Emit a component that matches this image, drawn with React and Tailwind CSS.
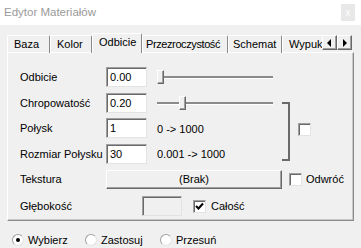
import React from 'react'

const TABS = [
  { label: 'Baza', w: 'w-[43px]', pad: 'pl-[6px]' },
  { label: 'Kolor', w: 'w-[42px]', pad: 'pl-[6px]' },
  { label: 'Odbicie', w: 'w-[50px]', pad: 'pl-[6px]', active: true },
  { label: 'Przezroczystość', w: 'w-[86px]', pad: 'pl-[3px] tracking-[-0.4px]' },
  { label: 'Schemat', w: 'w-[54px]', pad: 'pl-[4px]' },
  { label: 'Wypukłość', w: 'w-[60px]', pad: 'pl-[6px]' },
]

const sunken =
  'border border-t-[#a0a0a0] border-l-[#a0a0a0] border-r-[#e3e3e3] border-b-[#e3e3e3] shadow-[inset_1px_1px_0_#696969]'
const raised =
  'border border-t-white border-l-white border-r-[#696969] border-b-[#696969] shadow-[inset_-1px_-1px_0_#a0a0a0]'

function Checkbox({ checked }) {
  return (
    <div className={`w-[13px] h-[13px] bg-white flex items-center justify-center ${sunken}`}>
      {checked && (
        <svg width="9" height="9" viewBox="0 0 9 9">
          <path d="M1 4 L3.5 6.5 L8 1.5" stroke="#000" strokeWidth="2" fill="none" />
        </svg>
      )}
    </div>
  )
}

function Radio({ checked }) {
  return (
    <div className="w-[12px] h-[12px] rounded-full bg-white border border-t-[#a0a0a0] border-l-[#a0a0a0] border-r-[#e3e3e3] border-b-[#e3e3e3] flex items-center justify-center">
      {checked && <div className="w-[4px] h-[4px] rounded-full bg-black" />}
    </div>
  )
}

function Slider({ pos }) {
  return (
    <div className="relative w-[116px] h-[14px] flex items-center">
      <div className="w-full h-[3px] border-t-2 border-[#8a8a8a] border-b border-b-white" />
      <div className={`absolute top-0 ${pos} w-[7px] h-[14px] bg-[#f0f0f0] ${raised}`} />
    </div>
  )
}

function Field({ value }) {
  return (
    <div className={`w-[41px] h-[20px] bg-white pl-[3px] flex items-center ${sunken}`}>{value}</div>
  )
}

function ArrowBtn({ dir }) {
  return (
    <div className={`w-[15px] h-[15px] bg-[#f0f0f0] flex items-center justify-center ${raised}`}>
      <svg width="5" height="8" viewBox="0 0 5 8">
        {dir === 'left' ? <path d="M4 0 L0 4 L4 8 Z" fill="#000" /> : <path d="M1 0 L5 4 L1 8 Z" fill="#000" />}
      </svg>
    </div>
  )
}

export default function App() {
  return (
    <div
      className="w-[361px] h-[248px] bg-[#f0f0f0] text-[11px] text-black overflow-hidden"
      style={{ fontFamily: '"Liberation Sans", Arial, sans-serif' }}
    >
      {/* title bar */}
      <div className="h-[25px] bg-white flex items-center justify-between pl-[4px] pr-[6px]">
        <span className="text-[#9a9a9a] text-[11.5px]">Edytor Materiałów</span>
        <div className="w-[14px] h-[17px] bg-[#e8e8e8] text-white text-[10px] flex items-center justify-center">x</div>
      </div>

      {/* tabs */}
      <div className="flex items-end pt-[8px] pl-[7px]">
        <div className="w-[315px] h-[20px] flex items-end overflow-hidden">
          {TABS.map(t => (
            <div
              key={t.label}
              className={`${t.w} ${t.pad} shrink-0 flex items-center whitespace-nowrap border-t border-l border-t-white border-l-white border-r border-r-[#8a8a8a] rounded-t-[2px] ${
                t.active ? 'h-[20px] pb-[3px] relative z-10 bg-[#f0f0f0]' : 'h-[18px]'
              }`}
            >
              {t.label}
            </div>
          ))}
        </div>
        <div className="flex self-start mt-[2px]">
          <ArrowBtn dir="left" />
          <ArrowBtn dir="right" />
        </div>
      </div>

      {/* panel */}
      <div className="ml-[7px] -mt-px w-[347px] h-[169px] border border-t-white border-l-white border-r-[#8a8a8a] border-b-[#8a8a8a] shadow-[inset_-1px_-1px_0_#c8c8c8] pl-[12px] pt-[14px]">
        <div className="flex items-start">
          <div className="w-[262px]">
            <div className="flex items-center h-[20px]">
              <span className="w-[86px]">Odbicie</span>
              <Field value="0.00" />
              <div className="ml-[10px]"><Slider pos="left-0" /></div>
            </div>
            <div className="flex items-center h-[20px] mt-[6px]">
              <span className="w-[86px]">Chropowatość</span>
              <Field value="0.20" />
              <div className="ml-[10px]"><Slider pos="left-[22px]" /></div>
            </div>
            <div className="flex items-center h-[20px] mt-[5px]">
              <span className="w-[86px]">Połysk</span>
              <Field value="1" />
              <span className="ml-[10px] mt-[3px]">0 -&gt; 1000</span>
            </div>
            <div className="flex items-center h-[20px] mt-[6px]">
              <span className="w-[86px]">Rozmiar Połysku</span>
              <Field value="30" />
              <span className="ml-[10px]">0.001 -&gt; 1000</span>
            </div>
          </div>
          <div className="mt-[35px] w-[8px] h-[59px] border-t-2 border-r-2 border-b-2 border-[#6a6a6a]" />
          <div className="mt-[56px] ml-[8px]"><Checkbox /></div>
        </div>

        <div className="flex items-center h-[19px] mt-[6px]">
          <span className="w-[86px]">Tekstura</span>
          <div className={`w-[176px] h-[19px] bg-[#f0f0f0] flex items-center justify-center ${raised}`}>(Brak)</div>
          <div className="ml-[7px]"><Checkbox /></div>
          <span className="ml-[4px]">Odwróć</span>
        </div>

        <div className="flex items-center h-[20px] mt-[7px]">
          <span className="w-[122px]">Głębokość</span>
          <div className={`w-[40px] h-[20px] bg-[#f0f0f0] ${sunken}`} />
          <div className="ml-[11px]"><Checkbox checked /></div>
          <span className="ml-[5px]">Całość</span>
        </div>
      </div>

      {/* mode radios */}
      <div className="flex items-center h-[14px] mt-[12px] pl-[12px] text-[11px]">
        <div className="w-[73px] flex items-center gap-[4px]">
          <Radio checked />
          <span>Wybierz</span>
        </div>
        <div className="w-[75px] flex items-center gap-[4px]">
          <Radio />
          <span>Zastosuj</span>
        </div>
        <div className="flex items-center gap-[4px]">
          <Radio />
          <span>Przesuń</span>
        </div>
      </div>
    </div>
  )
}
